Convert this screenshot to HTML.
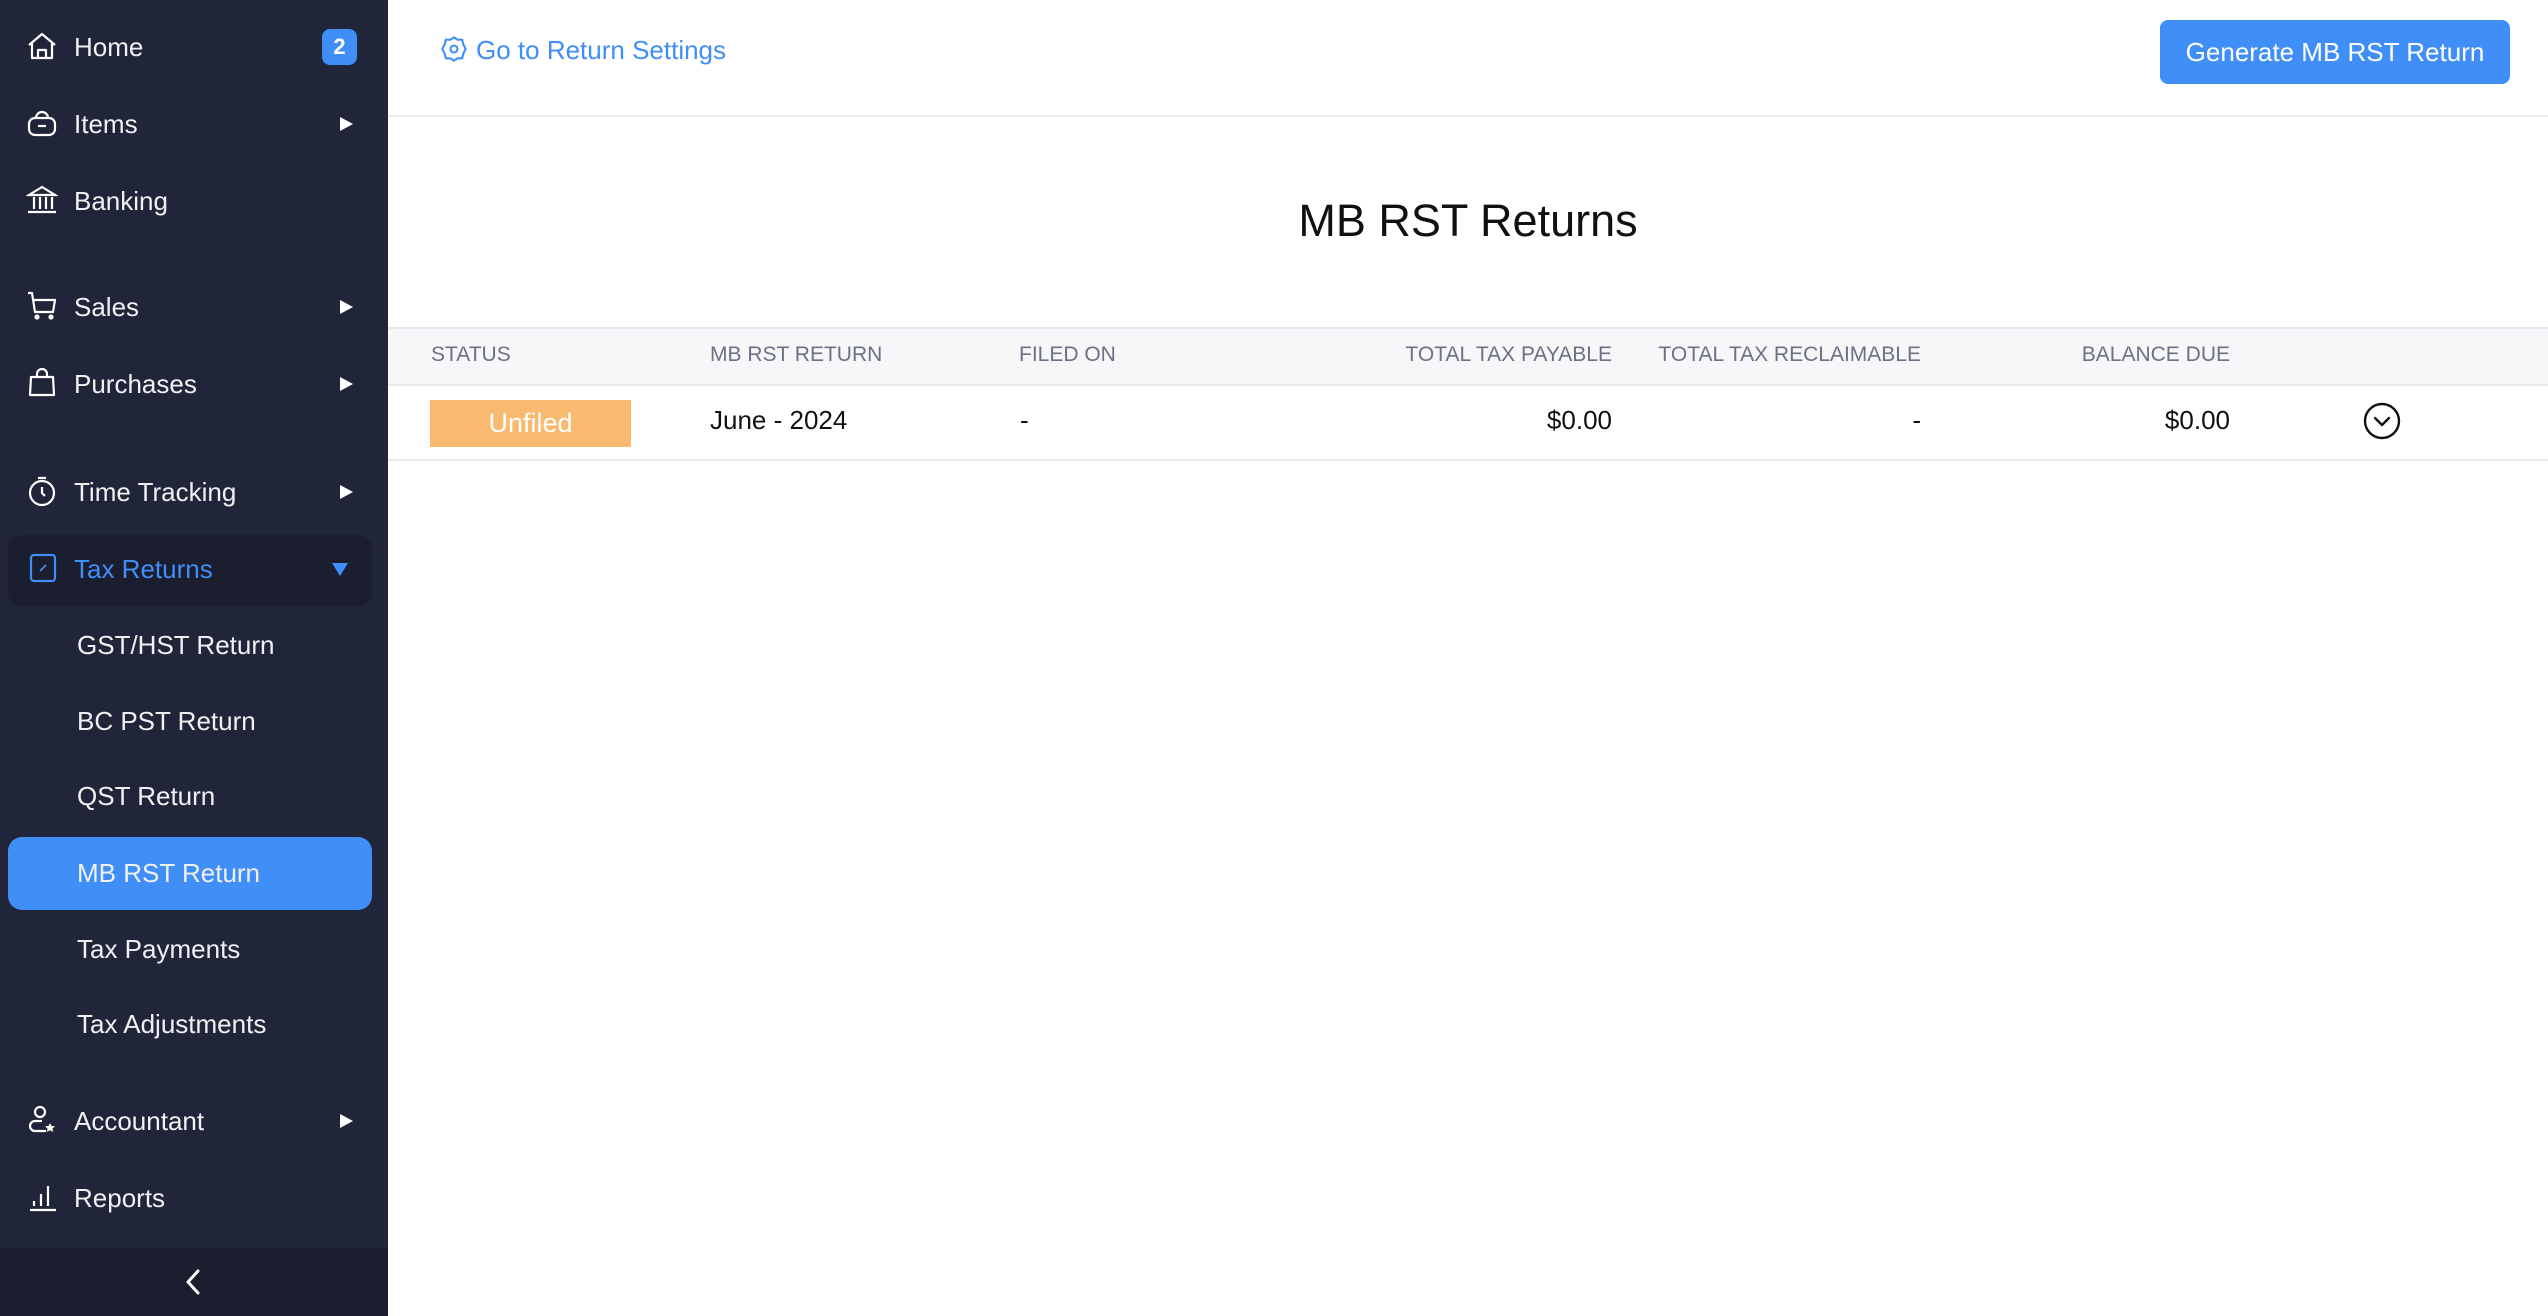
<!DOCTYPE html>
<html><head><meta charset="utf-8"><style>
*{margin:0;padding:0;box-sizing:border-box}
body{width:2548px;height:1316px;overflow:hidden;font-family:"Liberation Sans",sans-serif;background:#fff;position:relative}
.sb{position:absolute;left:0;top:0;width:388px;height:1316px;background:#21253a}
.sb .bot{position:absolute;left:0;bottom:0;width:388px;height:68px;background:#1b1e2f}
.it{position:absolute;left:0;width:388px;color:#f1f1f4;font-size:26px;line-height:30px}
.it .t{position:absolute;left:74px;top:0;white-space:nowrap}
.it .s{position:absolute;left:77px;top:0;white-space:nowrap}
.it svg.ic{position:absolute;left:26px;top:-2px}
.arr{position:absolute;left:340px;top:8px;width:0;height:0;border-left:13px solid #fff;border-top:7.5px solid transparent;border-bottom:7.5px solid transparent}
.hl{position:absolute;left:8px;width:364px;border-radius:14px}
.main{position:absolute;left:388px;top:0;right:0;bottom:0}
.hdr{position:absolute;left:0;top:0;right:0;height:117px;border-bottom:2px solid #ececf0}
th,td{}
.c{position:absolute;white-space:nowrap}
.h{font-size:21px;color:#6b7085;top:343px;line-height:24px}
.r{font-size:26px;color:#111;top:405px;line-height:30px}
</style></head><body>
<div class="sb">
  <div class="hl" style="top:535px;height:71px;background:#1b1e2f"></div>
  <div class="hl" style="top:837px;height:73px;background:#408ef8"></div>

  <div class="it" style="top:32px"><svg class="ic" width="32" height="32" viewBox="0 0 32 32" fill="none" stroke="#fff" stroke-width="2.2" stroke-linejoin="round"><path d="M3 15 L16 4 L29 15 M6 12 V28 H26 V12 M12 28 V20 H20 V28"/></svg><span class="t">Home</span>
   <div style="position:absolute;left:322px;top:-3px;width:35px;height:36px;border-radius:8px;background:#408ef8;color:#fff;font-weight:bold;font-size:22px;text-align:center;line-height:36px">2</div></div>

  <div class="it" style="top:109px"><svg class="ic" width="32" height="32" viewBox="0 0 32 32" fill="none" stroke="#fff" stroke-width="2.2"><path d="M10 11 A6 6 0 0 1 22 11"/><rect x="3" y="11" width="26" height="17" rx="6"/><path d="M12 19 H20"/></svg><span class="t">Items</span><div class="arr"></div></div>

  <div class="it" style="top:186px"><svg class="ic" width="32" height="32" viewBox="0 0 32 32" fill="none" stroke="#fff" stroke-width="2.2"><path d="M3 11 L16 3 L29 11 Z M8 13 V25 M14 13 V25 M20 13 V25 M26 13 V25 M2 28 H30"/></svg><span class="t">Banking</span></div>

  <div class="it" style="top:292px"><svg class="ic" width="32" height="32" viewBox="0 0 32 32" fill="none" stroke="#fff" stroke-width="2.2" stroke-linejoin="round"><path d="M2 3 H6 L9 22 H27 L29 10 H8"/><circle cx="11" cy="27" r="1.5" fill="#fff"/><circle cx="25" cy="27" r="1.5" fill="#fff"/></svg><span class="t">Sales</span><div class="arr"></div></div>

  <div class="it" style="top:369px"><svg class="ic" width="32" height="32" viewBox="0 0 32 32" fill="none" stroke="#fff" stroke-width="2.2" stroke-linejoin="round"><path d="M11 10 V7 A5 5 0 0 1 21 7 V10 M5 10 H27 L28 28 H4 Z"/></svg><span class="t">Purchases</span><div class="arr"></div></div>

  <div class="it" style="top:477px"><svg class="ic" width="32" height="32" viewBox="0 0 32 32" fill="none" stroke="#fff" stroke-width="2.2"><circle cx="16" cy="18" r="12"/><path d="M12 3 H20 M16 12 V18 L19 21"/></svg><span class="t">Time Tracking</span><div class="arr"></div></div>

  <div class="it" style="top:554px;color:#408ef8"><svg class="ic" width="32" height="32" viewBox="0 0 32 32" fill="none" stroke="#408ef8" stroke-width="2.2"><rect x="5" y="3" width="24" height="26" rx="3"/><path d="M14 19 L20 13" stroke-width="1.6"/></svg><span class="t">Tax Returns</span>
   <div style="position:absolute;left:332px;top:9px;border-top:13px solid #408ef8;border-left:8px solid transparent;border-right:8px solid transparent"></div></div>

  <div class="it" style="top:630px"><span class="s">GST/HST Return</span></div>
  <div class="it" style="top:706px"><span class="s">BC PST Return</span></div>
  <div class="it" style="top:781px"><span class="s">QST Return</span></div>
  <div class="it" style="top:858px"><span class="s">MB RST Return</span></div>
  <div class="it" style="top:934px"><span class="s">Tax Payments</span></div>
  <div class="it" style="top:1009px"><span class="s">Tax Adjustments</span></div>

  <div class="it" style="top:1106px"><svg class="ic" width="32" height="32" viewBox="0 0 32 32" fill="none" stroke="#fff" stroke-width="2.2"><circle cx="14" cy="8" r="5"/><path d="M20 27 H9 A5 5 0 0 1 9 17 H16"/><path d="M24 19 L25.5 22 L29 22.3 L26.4 24.6 L27.2 28 L24 26.2 L20.8 28 L21.6 24.6 L19 22.3 L22.5 22 Z" fill="#fff" stroke="none"/></svg><span class="t">Accountant</span><div class="arr"></div></div>

  <div class="it" style="top:1183px"><svg class="ic" width="32" height="32" viewBox="0 0 32 32" fill="none" stroke="#fff" stroke-width="2.2"><path d="M4 29 H30 M8 20 V25 M15 13 V25 M22 5 V25"/></svg><span class="t">Reports</span></div>

  <div class="bot"><svg style="position:absolute;left:183px;top:20px" width="20" height="28" viewBox="0 0 20 28" fill="none" stroke="#fff" stroke-width="3" stroke-linecap="round" stroke-linejoin="round"><path d="M15 3 L5 14 L15 25"/></svg></div>
</div>

<div class="main">
  <div class="hdr">
    <svg style="position:absolute;left:52px;top:35px" width="28" height="28" viewBox="0 0 24 24" fill="none" stroke="#408ef8" stroke-width="1.8" stroke-linejoin="round"><path d="M12 2 L15 4 L19 4 L20 8 L22 12 L20 16 L19 20 L15 20 L12 22 L9 20 L5 20 L4 16 L2 12 L4 8 L5 4 L9 4 Z"/><circle cx="12" cy="12" r="3"/></svg>
    <div class="c" style="left:88px;top:35px;font-size:26px;color:#408ef8;line-height:30px">Go to Return Settings</div>
    <div style="position:absolute;left:1772px;top:20px;width:350px;height:64px;background:#408ef8;border-radius:8px;color:#fff;font-size:26px;line-height:64px;text-align:center">Generate MB RST Return</div>
  </div>
  <div class="c" style="left:0;right:0;top:194px;text-align:center;font-size:45px;color:#111;line-height:54px">MB RST Returns</div>
  <div style="position:absolute;left:0;right:0;top:327px;height:59px;background:#f7f7fa;border-top:2px solid #e8e8ee;border-bottom:2px solid #e8e8ee"></div>
  <div style="position:absolute;left:0;right:0;top:459px;height:2px;background:#e8e8ee"></div>
  <div class="c h" style="left:43px">STATUS</div>
  <div class="c h" style="left:322px">MB RST RETURN</div>
  <div class="c h" style="left:631px">FILED ON</div>
  <div class="c h" style="right:936px">TOTAL TAX PAYABLE</div>
  <div class="c h" style="right:627px">TOTAL TAX RECLAIMABLE</div>
  <div class="c h" style="right:318px">BALANCE DUE</div>
  <div style="position:absolute;left:42px;top:400px;width:201px;height:47px;background:#f9b96e;color:#fff;font-size:27px;line-height:47px;text-align:center">Unfiled</div>
  <div class="c r" style="left:322px">June - 2024</div>
  <div class="c r" style="left:632px">-</div>
  <div class="c r" style="right:936px">$0.00</div>
  <div class="c r" style="right:627px">-</div>
  <div class="c r" style="right:318px">$0.00</div>
  <svg style="position:absolute;left:1975px;top:402px" width="38" height="38" viewBox="0 0 38 38" fill="none" stroke="#111" stroke-width="2.4"><circle cx="19" cy="19" r="17"/><path d="M12 16 L19 23 L26 16" stroke-linecap="round" stroke-linejoin="round"/></svg>
</div>
</body></html>
